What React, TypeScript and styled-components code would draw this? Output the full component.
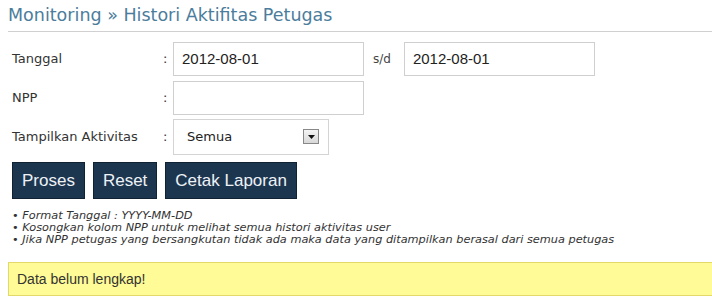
import styled, { createGlobalStyle } from 'styled-components';

const GlobalStyle = createGlobalStyle`
  body {
    margin: 0;
    background: #fff;
    font-family: "DejaVu Sans", Verdana, sans-serif;
    color: #333;
  }
`;

export default function App() {
  return (
    <Page>
      <GlobalStyle />
      <Title>Monitoring » Histori Aktifitas Petugas</Title>
      <Form>
        <Label>Tanggal</Label>
        <Colon>:</Colon>
        <Field>
          <TextInput defaultValue="2012-08-01" />
          <Between>s/d</Between>
          <TextInput defaultValue="2012-08-01" />
        </Field>

        <Label>NPP</Label>
        <Colon>:</Colon>
        <Field>
          <TextInput defaultValue="" />
        </Field>

        <Label>Tampilkan Aktivitas</Label>
        <Colon>:</Colon>
        <Field>
          <Select>
            <span>Semua</span>
            <ArrowBox>
              <svg width="7" height="4" viewBox="0 0 7 4">
                <path d="M0 0h7L3.5 4z" fill="#111" />
              </svg>
            </ArrowBox>
          </Select>
        </Field>
      </Form>
      <Buttons>
        <Button>Proses</Button>
        <Button>Reset</Button>
        <Button>Cetak Laporan</Button>
      </Buttons>
      <Notes>
        <li>Format Tanggal : YYYY-MM-DD</li>
        <li>Kosongkan kolom NPP untuk melihat semua histori aktivitas user</li>
        <li>Jika NPP petugas yang bersangkutan tidak ada maka data yang ditampilkan berasal dari semua petugas</li>
      </Notes>
      <Alert>Data belum lengkap!</Alert>
    </Page>
  );
}

const Page = styled.div`
  padding: 0 0 0 8px;
  width: 704px;
`;

const Title = styled.h1`
  margin: 0;
  padding: 6px 0 7px;
  font-size: 17.5px;
  font-weight: normal;
  color: #4b7d9c;
  border-bottom: 1px solid #d0d0d0;
  line-height: 18px;
`;

const Form = styled.div`
  display: grid;
  grid-template-columns: 151px 10px auto;
  grid-auto-rows: 33px;
  row-gap: 6px;
  align-items: center;
  padding: 10px 0 0 4px;
`;

const Label = styled.div`
  font-size: 13px;
  color: #333;
`;

const Colon = styled.div`
  font-size: 13px;
  color: #333;
`;

const Field = styled.div`
  display: flex;
  align-items: center;
  gap: 10px;
`;

const TextInput = styled.input`
  box-sizing: border-box;
  width: 191px;
  height: 34px;
  border: 1px solid #cfcfcf;
  padding: 0 8px;
  font-family: "Liberation Sans", Arial, sans-serif;
  font-size: 15px;
  color: #222;
  outline: none;
`;

const Between = styled.span`
  font-size: 12px;
  color: #444;
  margin: 0 3px 0 -1px;
`;

const Select = styled.div`
  box-sizing: border-box;
  width: 156px;
  height: 36px;
  border: 1px solid #d4d4d4;
  display: flex;
  align-items: center;
  justify-content: space-between;
  padding: 0 9px 0 13px;
  font-size: 13px;
  color: #222;
`;

const ArrowBox = styled.span`
  box-sizing: border-box;
  width: 16px;
  height: 15px;
  border: 1px solid #888;
  background: linear-gradient(#f4f4f4, #d8d8d8);
  display: flex;
  align-items: center;
  justify-content: center;
`;

const Buttons = styled.div`
  display: flex;
  gap: 8px;
  padding: 9px 0 0 4px;
`;

const Button = styled.button`
  height: 37px;
  padding: 0 9px;
  border: 1px solid #0f2233;
  background: #1d3650;
  color: #eef2f6;
  font-family: "Liberation Sans", Arial, sans-serif;
  font-size: 17px;
  cursor: pointer;
`;

const Notes = styled.ul`
  list-style: none;
  margin: 0;
  padding: 11px 0 0 4px;
  font-size: 11.3px;
  font-style: italic;
  line-height: 12px;
  color: #333;

  li::before {
    content: '• ';
    font-style: normal;
  }
`;

const Alert = styled.div`
  margin-top: 16px;
  box-sizing: border-box;
  height: 34px;
  display: flex;
  align-items: center;
  padding: 0 8px;
  background: #fffb96;
  border: 1px solid #e3d96a;
  border-right: none;
  font-family: "Liberation Sans", Arial, sans-serif;
  font-size: 14px;
  color: #333;
`;
